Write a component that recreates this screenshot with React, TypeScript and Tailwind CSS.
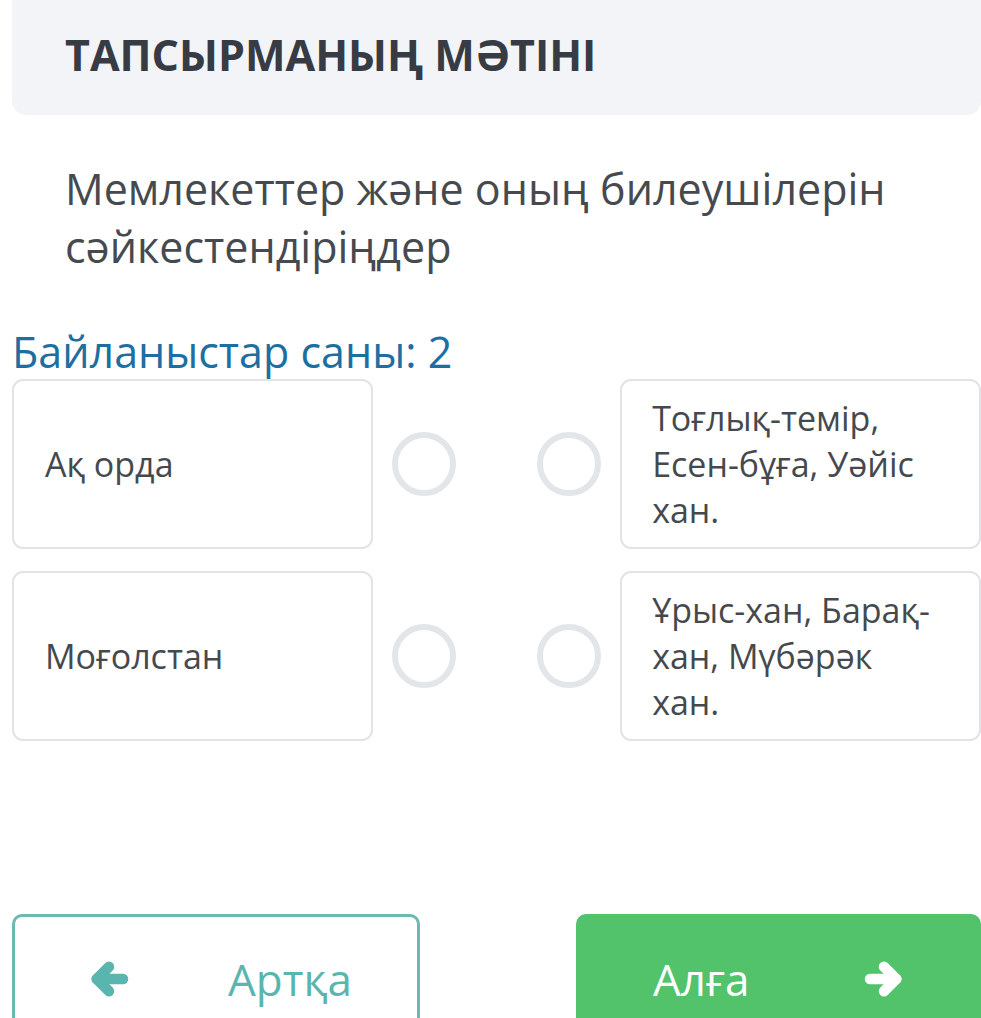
import React from "react";

const cards = [
  { left: "Ақ орда", right: ["Тоғлық-темір,", "Есен-бұға, Уәйіс", "хан."] },
  { left: "Моғолстан", right: ["Ұрыс-хан, Барақ-", "хан, Мүбәрәк", "хан."] },
];

function Arrow({ dir, className }: { dir: "left" | "right"; className?: string }) {
  return (
    <svg viewBox="0 0 24 24" width="46" height="42" className={className} fill="none" stroke="currentColor" strokeWidth="6" strokeLinecap="round" strokeLinejoin="round">
      {dir === "left" ? (
        <>
          <path d="M5 12h15" />
          <path d="M12 5l-7 7 7 7" />
        </>
      ) : (
        <>
          <path d="M19 12H4" />
          <path d="M12 5l7 7-7 7" />
        </>
      )}
    </svg>
  );
}

export default function App() {
  return (
    <div className="w-[981px] h-[1018px] overflow-hidden bg-white pl-[12px] font-['Open_Sans',sans-serif]">
      <div className="h-[115px] bg-[#f3f4f7] rounded-b-[14px] flex items-center pl-[53px] pb-[6px]">
        <h1 className="text-[43px] font-bold text-[#373b44] leading-none">ТАПСЫРМАНЫҢ МӘТІНІ</h1>
      </div>

      <p className="mt-[45px] pl-[53px] pr-[60px] text-[43px] leading-[58px] text-[#464a4f]">
        Мемлекеттер және оның билеушілерін сәйкестендіріңдер
      </p>

      <div className="mt-[51px] text-[43px] leading-[50px] text-[#1d6fa1]">Байланыстар саны: 2</div>

      <div className="mt-[2px] flex flex-col gap-[22px]">
        {cards.map((c, i) => (
          <div key={i} className="flex items-center">
            <div className="w-[362px] h-[170px] border-2 border-[#e2e3e4] rounded-[11px] flex items-center pl-[31px] text-[34px] text-[#45494e]">
              {c.left}
            </div>
            <div className="w-[248px] flex items-center justify-between pl-[19px] pr-[19px]">
              <div className="w-[64px] h-[64px] rounded-full border-[6px] border-[#e3e6e9]" />
              <div className="w-[64px] h-[64px] rounded-full border-[6px] border-[#e3e6e9]" />
            </div>
            <div className="w-[362px] h-[170px] border-2 border-[#e2e3e4] rounded-[11px] flex flex-col justify-center pl-[30px] text-[34px] leading-[46px] text-[#45494e]">
              {c.right.map((l, j) => (
                <span key={j}>{l}</span>
              ))}
            </div>
          </div>
        ))}
      </div>

      <div className="mt-[173px] flex gap-[156px]">
        <button className="w-[408px] h-[130px] border-[3px] border-[#6cb9b1] rounded-[10px] flex items-center pl-[71px] text-[#5bb5af]">
          <Arrow dir="left" />
          <span className="ml-[96px] text-[44px]">Артқа</span>
        </button>
        <button className="w-[405px] h-[130px] bg-[#52c26b] rounded-[10px] flex items-center justify-between pl-[77px] pr-[74px] text-white">
          <span className="text-[44px]">Алға</span>
          <Arrow dir="right" />
        </button>
      </div>
    </div>
  );
}
